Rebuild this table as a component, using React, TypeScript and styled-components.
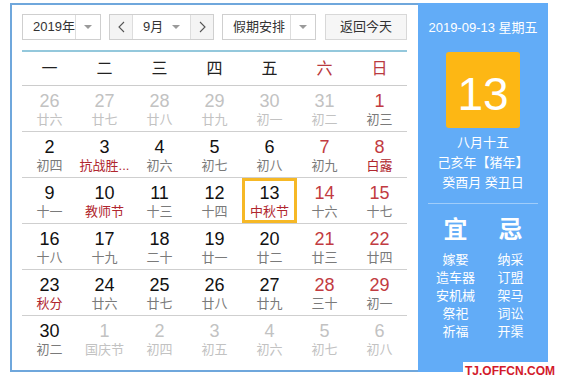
import React from 'react';
import styled, { createGlobalStyle } from 'styled-components';

const Global = createGlobalStyle`
  html, body { margin: 0; padding: 0; background: #fff; }
  body { font-family: "Liberation Sans", "Noto Sans CJK SC", sans-serif; }
  #root { width: 561px; height: 380px; }
`;

const Root = styled.div`
  position: relative;
  width: 561px;
  height: 380px;
  box-sizing: border-box;
  padding: 3px 0 0 10px;
  background: #fff;
`;

const Frame = styled.div`
  display: flex;
  width: 538px;
  height: 369px;
`;

const Main = styled.div`
  width: 408px;
  box-sizing: border-box;
  border: 2px solid #6fa7dc;
  border-right: none;
  padding: 9px 11px 0 10px;
  display: flex;
  flex-direction: column;
`;

const Toolbar = styled.div`
  display: flex;
  align-items: stretch;
  gap: 8px;
  height: 26px;
  padding-bottom: 10px;
  border-bottom: 2px solid #94c8dc;
`;

const Box = styled.div<{ $w: number }>`
  display: flex;
  width: ${(p) => p.$w}px;
  box-sizing: border-box;
  border: 1px solid #cfcfcf;
  background: #fff;
  font-size: 13px;
  color: #333;
  line-height: 24px;
`;

const BoxText = styled.div`
  flex: 1;
  padding-left: 10px;
  white-space: nowrap;
`;

const CaretPart = styled.div`
  width: 24px;
  border-left: 1px solid #ddd;
  display: flex;
  align-items: center;
  justify-content: center;
`;

const Caret = styled.span`
  width: 0;
  height: 0;
  border-left: 4px solid transparent;
  border-right: 4px solid transparent;
  border-top: 4px solid #9a9a9a;
`;

const NavBtn = styled.div<{ $side: 'l' | 'r' }>`
  width: 22px;
  background: #f4f4f4;
  display: flex;
  align-items: center;
  justify-content: center;
  ${(p) => (p.$side === 'l' ? 'border-right: 1px solid #ddd;' : 'border-left: 1px solid #ddd;')}
`;

const MonthMid = styled.div`
  flex: 1;
  display: flex;
  align-items: center;
  justify-content: space-between;
  padding: 0 10px 0 10px;
`;

const TodayBtn = styled.div`
  margin-left: auto;
  width: 82px;
  box-sizing: border-box;
  border: 1px solid #d8d8d8;
  background: #f6f6f6;
  font-size: 13px;
  color: #333;
  line-height: 24px;
  text-align: center;
`;

const WeekHead = styled.div`
  display: grid;
  grid-template-columns: repeat(7, 55px);
  height: 33px;
  border-bottom: 1px solid #cccccc;
`;

const HeadCell = styled.div<{ $we: boolean }>`
  text-align: center;
  line-height: 33px;
  font-size: 16px;
  color: ${(p) => (p.$we ? '#b93a40' : '#222')};
`;

const Week = styled.div<{ $last: boolean }>`
  display: grid;
  grid-template-columns: repeat(7, 55px);
  height: 45px;
  border-bottom: ${(p) => (p.$last ? 'none' : '1px solid #cfcfcf')};
`;

const Cell = styled.div<{ $sel: boolean }>`
  display: flex;
  flex-direction: column;
  align-items: center;
  padding-top: 5px;
  box-sizing: border-box;
  box-shadow: ${(p) => (p.$sel ? 'inset 0 0 0 3px #f6b826' : 'none')};
`;

const Num = styled.div<{ $c: string }>`
  font-size: 18px;
  line-height: 20px;
  color: ${(p) => p.$c};
`;

const Lunar = styled.div<{ $c: string }>`
  font-size: 13px;
  line-height: 18px;
  color: ${(p) => p.$c};
  white-space: nowrap;
`;

const Side = styled.div`
  flex: 1;
  background: #62acf7;
  display: flex;
  flex-direction: column;
  align-items: center;
  padding-top: 15px;
  color: #fff;
`;

const DateLine = styled.div`
  font-size: 13px;
  line-height: 20px;
  white-space: nowrap;
`;

const BigDay = styled.div`
  margin-top: 14px;
  width: 74px;
  height: 76px;
  border-radius: 3px;
  background: #fdb714;
  display: flex;
  align-items: center;
  justify-content: center;
  box-sizing: border-box;
  padding-top: 7px;
  font-size: 46px;
  line-height: 50px;
  color: #fff;
`;

const LunarInfo = styled.div`
  margin-top: 5px;
  font-size: 13px;
  line-height: 20px;
  text-align: center;
  white-space: nowrap;
`;

const Divider = styled.div`
  margin-top: 10px;
  width: 110px;
  height: 1px;
  background: rgba(255, 255, 255, 0.4);
`;

const YiJi = styled.div`
  display: grid;
  grid-template-columns: 55px 55px;
  text-align: center;
`;

const YiJiTitle = styled.div`
  margin-top: 11px;
  font-size: 24px;
  line-height: 30px;
  font-weight: bold;
`;

const YiJiList = styled.div`
  margin-top: 6px;
  font-size: 13px;
  line-height: 18px;
`;

const Watermark = styled.div`
  position: absolute;
  left: 463px;
  top: 362px;
  width: 98px;
  height: 18px;
  background: #fff;
  padding-left: 2px;
  box-sizing: border-box;
  font-family: "Liberation Sans", sans-serif;
  font-weight: bold;
  font-size: 12px;
  line-height: 18px;
  color: #d21a2b;
`;

const Chevron = ({ dir }: { dir: 'l' | 'r' }) => (
  <svg width="7" height="12" viewBox="0 0 7 12">
    <polyline
      points={dir === 'l' ? '6,1 1,6 6,11' : '1,1 6,6 1,11'}
      fill="none"
      stroke="#555"
      strokeWidth="1.1"
    />
  </svg>
);

type Day = { d: number; l: string; m?: boolean; f?: boolean; s?: boolean };

const weeks: Day[][] = [
  [
    { d: 26, l: '廿六', m: true },
    { d: 27, l: '廿七', m: true },
    { d: 28, l: '廿八', m: true },
    { d: 29, l: '廿九', m: true },
    { d: 30, l: '初一', m: true },
    { d: 31, l: '初二', m: true },
    { d: 1, l: '初三' },
  ],
  [
    { d: 2, l: '初四' },
    { d: 3, l: '抗战胜...', f: true },
    { d: 4, l: '初六' },
    { d: 5, l: '初七' },
    { d: 6, l: '初八' },
    { d: 7, l: '初九' },
    { d: 8, l: '白露', f: true },
  ],
  [
    { d: 9, l: '十一' },
    { d: 10, l: '教师节', f: true },
    { d: 11, l: '十三' },
    { d: 12, l: '十四' },
    { d: 13, l: '中秋节', f: true, s: true },
    { d: 14, l: '十六' },
    { d: 15, l: '十七' },
  ],
  [
    { d: 16, l: '十八' },
    { d: 17, l: '十九' },
    { d: 18, l: '二十' },
    { d: 19, l: '廿一' },
    { d: 20, l: '廿二' },
    { d: 21, l: '廿三' },
    { d: 22, l: '廿四' },
  ],
  [
    { d: 23, l: '秋分', f: true },
    { d: 24, l: '廿六' },
    { d: 25, l: '廿七' },
    { d: 26, l: '廿八' },
    { d: 27, l: '廿九' },
    { d: 28, l: '三十' },
    { d: 29, l: '初一' },
  ],
  [
    { d: 30, l: '初二' },
    { d: 1, l: '国庆节', m: true },
    { d: 2, l: '初四', m: true },
    { d: 3, l: '初五', m: true },
    { d: 4, l: '初六', m: true },
    { d: 5, l: '初七', m: true },
    { d: 6, l: '初八', m: true },
  ],
];

const heads = ['一', '二', '三', '四', '五', '六', '日'];
const yi = ['嫁娶', '造车器', '安机械', '祭祀', '祈福'];
const ji = ['纳采', '订盟', '架马', '词讼', '开渠'];

const MUTED = '#c2c2c2';

export default function App() {
  return (
    <Root>
      <Global />
      <Frame>
        <Main>
          <Toolbar>
            <Box $w={79}>
              <BoxText>2019年</BoxText>
              <CaretPart>
                <Caret />
              </CaretPart>
            </Box>
            <Box $w={105}>
              <NavBtn $side="l">
                <Chevron dir="l" />
              </NavBtn>
              <MonthMid>
                <span>9月</span>
                <Caret />
              </MonthMid>
              <NavBtn $side="r">
                <Chevron dir="r" />
              </NavBtn>
            </Box>
            <Box $w={94}>
              <BoxText>假期安排</BoxText>
              <CaretPart>
                <Caret />
              </CaretPart>
            </Box>
            <TodayBtn>返回今天</TodayBtn>
          </Toolbar>
          <WeekHead>
            {heads.map((h, i) => (
              <HeadCell key={h} $we={i >= 5}>
                {h}
              </HeadCell>
            ))}
          </WeekHead>
          {weeks.map((w, wi) => (
            <Week key={wi} $last={wi === weeks.length - 1}>
              {w.map((day, di) => {
                const numColor = day.m ? MUTED : di >= 5 ? '#c23b41' : '#111';
                const lunarColor = day.m ? MUTED : day.f ? '#b0262e' : '#7a7a7a';
                return (
                  <Cell key={di} $sel={!!day.s}>
                    <Num $c={numColor}>{day.d}</Num>
                    <Lunar $c={lunarColor}>{day.l}</Lunar>
                  </Cell>
                );
              })}
            </Week>
          ))}
        </Main>
        <Side>
          <DateLine>2019-09-13 星期五</DateLine>
          <BigDay>13</BigDay>
          <LunarInfo>
            八月十五
            <br />
            己亥年【猪年】
            <br />
            癸酉月 癸丑日
          </LunarInfo>
          <Divider />
          <YiJi>
            <YiJiTitle>宜</YiJiTitle>
            <YiJiTitle>忌</YiJiTitle>
          </YiJi>
          <YiJi>
            <YiJiList>
              {yi.map((t) => (
                <div key={t}>{t}</div>
              ))}
            </YiJiList>
            <YiJiList>
              {ji.map((t) => (
                <div key={t}>{t}</div>
              ))}
            </YiJiList>
          </YiJi>
        </Side>
      </Frame>
      <Watermark>TJ.OFFCN.COM</Watermark>
    </Root>
  );
}
